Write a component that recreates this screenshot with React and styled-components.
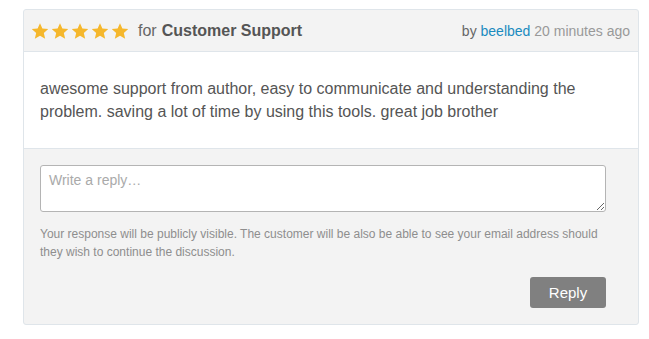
import React from "react";
import styled, { createGlobalStyle } from "styled-components";

const Global = createGlobalStyle`
  body {
    margin: 0;
    background: #fff;
    font-family: "Liberation Sans", Arial, sans-serif;
  }
`;

const Page = styled.div`
  padding: 9px 10px 14px 23px;
`;

const Card = styled.div`
  border: 1px solid #dfe5ea;
  border-radius: 3px;
  background: #f3f3f3;
  overflow: hidden;
`;

const Header = styled.div`
  display: flex;
  align-items: center;
  justify-content: space-between;
  height: 41px;
  padding: 0 8px 0 7px;
  border-bottom: 1px solid #dfe5ea;
  color: #666;
`;

const Rating = styled.div`
  display: flex;
  align-items: center;
  font-size: 16px;
`;

const Stars = styled.div`
  display: flex;
  gap: 2px;
  margin-right: 9px;
`;

const Product = styled.strong`
  margin-left: 5px;
  color: #555;
`;

const Meta = styled.div`
  font-size: 14px;
  color: #666;
`;

const Author = styled.a`
  color: #1a8bbf;
  text-decoration: none;
`;

const Ago = styled.span`
  color: #999;
`;

const Body = styled.div`
  background: #fff;
  border-bottom: 1px solid #dfe5ea;
  padding: 25px 16px 25px 16px;
  font-size: 16px;
  line-height: 23px;
  color: #555;
`;

const Footer = styled.div`
  padding: 16px 32px 16px 16px;
  display: flex;
  flex-direction: column;
`;

const ReplyBox = styled.textarea`
  box-sizing: border-box;
  height: 47px;
  width: 100%;
  border: 1px solid #b4b4b4;
  border-radius: 3px;
  padding: 6px 8px;
  font-family: "Liberation Sans", Arial, sans-serif;
  font-size: 14px;
  color: #555;
  resize: vertical;
  &::placeholder {
    color: #aaa;
  }
`;

const Note = styled.p`
  margin: 13px 0 16px;
  font-size: 12px;
  line-height: 18px;
  color: #8e8e8e;
`;

const Button = styled.button`
  align-self: flex-end;
  width: 76px;
  height: 31px;
  border: none;
  border-radius: 3px;
  background: #808080;
  color: #fff;
  font-family: "Liberation Sans", Arial, sans-serif;
  font-size: 15px;
`;

const Star = () => (
  <svg width="18" height="18" viewBox="0 0 24 24">
    <path
      fill="#f5b72c"
      d="M12 1.5l3.2 7.2 7.8.7-5.9 5.2 1.8 7.7L12 18.3l-6.9 4 1.8-7.7L1 9.4l7.8-.7z"
    />
  </svg>
);

export default function App() {
  return (
    <Page>
      <Global />
      <Card>
        <Header>
          <Rating>
            <Stars>
              {[0, 1, 2, 3, 4].map((i) => (
                <Star key={i} />
              ))}
            </Stars>
            for <Product>Customer Support</Product>
          </Rating>
          <Meta>
            by <Author href="#">beelbed</Author> <Ago>20 minutes ago</Ago>
          </Meta>
        </Header>
        <Body>
          awesome support from author, easy to communicate and understanding the
          problem. saving a lot of time by using this tools. great job brother
        </Body>
        <Footer>
          <ReplyBox placeholder="Write a reply…" />
          <Note>
            Your response will be publicly visible. The customer will be also be
            able to see your email address should they wish to continue the
            discussion.
          </Note>
          <Button>Reply</Button>
        </Footer>
      </Card>
    </Page>
  );
}
